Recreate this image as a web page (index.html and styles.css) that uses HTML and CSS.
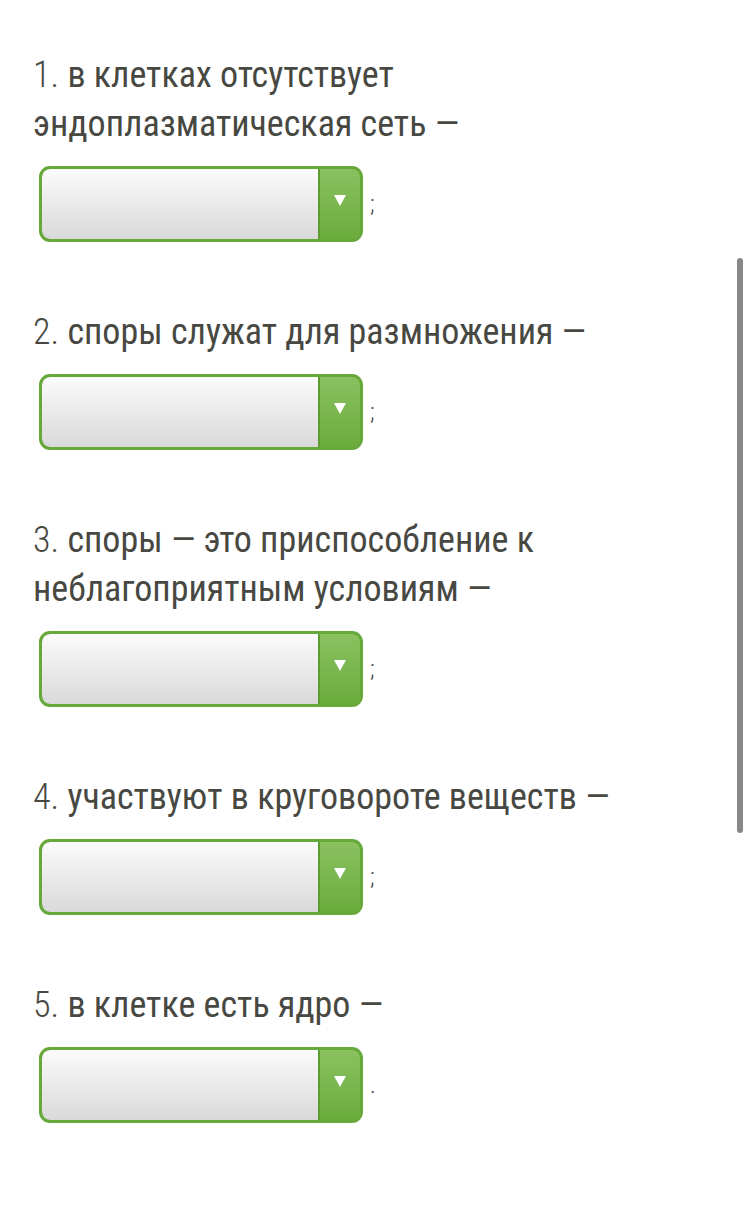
FILE: index.html
```html
<!DOCTYPE html>
<html lang="ru">
<head>
<meta charset="utf-8">
<link rel="stylesheet" href="styles.css">
</head>
<body>
<div class="page">
  <div class="item">
    <p class="q"><span class="num">1.</span> в клетках отсутствует эндоплазматическая сеть —</p>
    <div class="answer"><div class="select"><div class="field"></div><div class="btn"><span class="tri"></span></div></div><span class="punct">;</span></div>
  </div>
  <div class="item">
    <p class="q"><span class="num">2.</span> споры служат для размножения —</p>
    <div class="answer"><div class="select"><div class="field"></div><div class="btn"><span class="tri"></span></div></div><span class="punct">;</span></div>
  </div>
  <div class="item">
    <p class="q"><span class="num">3.</span> споры — это приспособление к неблагоприятным условиям —</p>
    <div class="answer"><div class="select"><div class="field"></div><div class="btn"><span class="tri"></span></div></div><span class="punct">;</span></div>
  </div>
  <div class="item">
    <p class="q"><span class="num">4.</span> участвуют в круговороте веществ —</p>
    <div class="answer"><div class="select"><div class="field"></div><div class="btn"><span class="tri"></span></div></div><span class="punct">;</span></div>
  </div>
  <div class="item">
    <p class="q"><span class="num">5.</span> в клетке есть ядро —</p>
    <div class="answer"><div class="select"><div class="field"></div><div class="btn"><span class="tri"></span></div></div><span class="punct">.</span></div>
  </div>
</div>
<div class="scrollbar"></div>
</body>
</html>
```
FILE: styles.css
```css
html, body {
  margin: 0;
  padding: 0;
  background: #ffffff;
}
body {
  font-family: "Roboto Condensed", Roboto, "Liberation Sans", sans-serif;
  color: #484842;
}
.page {
  padding: 51px 40px 0 33px;
}
.item {
  margin-bottom: 66px;
}
.q {
  margin: 0;
  font-size: 36px;
  line-height: 49px;
  font-weight: 400;
}
.num {
  font-weight: 300;
}
.answer {
  margin-top: 17px;
  margin-left: 6px;
  display: flex;
  align-items: center;
  gap: 7px;
}
.select {
  width: 324px;
  height: 76px;
  box-sizing: border-box;
  border: 3px solid #67a83a;
  border-radius: 11px;
  display: flex;
  overflow: hidden;
  background: #67a83a;
}
.field {
  flex: 1;
  background: linear-gradient(#fbfbfb, #d9d9d9);
  border-radius: 8px 0 0 8px;
}
.btn {
  width: 42px;
  border-left: 2px solid #5c9a32;
  background: linear-gradient(#8bc160, #6aac3c);
  display: flex;
  align-items: center;
  justify-content: center;
  padding-bottom: 8px;
  box-sizing: border-box;
}
.tri {
  width: 0;
  height: 0;
  border-left: 6px solid transparent;
  border-right: 6px solid transparent;
  border-top: 11px solid #ffffff;
}
.punct {
  font-size: 24px;
  color: #444444;
  font-weight: 300;
}
.scrollbar {
  position: absolute;
  left: 737px;
  top: 258px;
  width: 6px;
  height: 575px;
  border-radius: 3px;
  background: #888888;
}
```
